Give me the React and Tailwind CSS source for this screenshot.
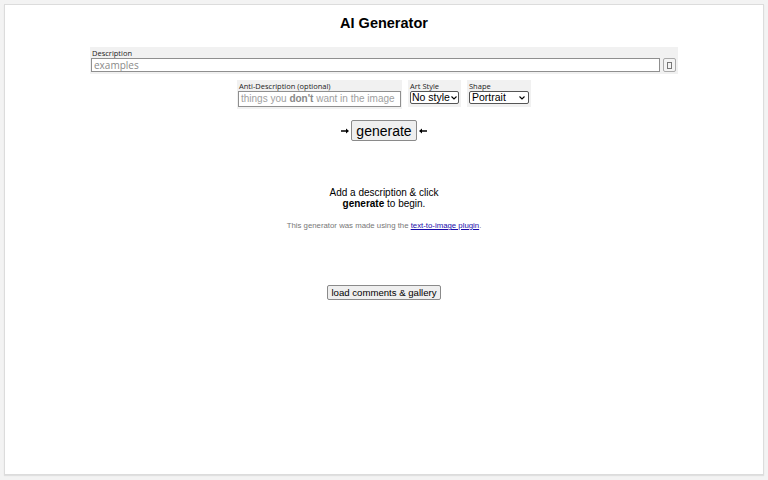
import React from 'react';

const font = { fontFamily: '"Liberation Sans", Arial, sans-serif' };
const labelFont = { fontFamily: '"Open Sans", "Noto Sans", sans-serif' };

const App = () => {
  return (
    <div className="w-[768px] h-[480px] bg-[#f3f3f3] p-[4px] pb-[5px]" style={font}>
      <div className="h-full bg-white border border-[#dcdcdc] shadow-[0_1px_1px_rgba(0,0,0,0.08)] flex flex-col items-center">
        <h1 className="mt-[9px] text-[14.5px] leading-[18px] font-bold text-black">AI Generator</h1>

        {/* description */}
        <div className="mt-[15px] w-[588px] bg-[#f1f1f1] px-[1px] pt-[1px] pb-[2px]">
          <div className="text-[7.5px] leading-[10px] text-[#222] pl-[1px]" style={labelFont}>Description</div>
          <div className="flex items-center gap-[3px]">
            <input
              className="w-[569px] h-[14px] border border-[#8f8f8f] bg-white px-[2px] text-[10px] text-[#333] placeholder:text-[#8a8a8a] outline-none"
              style={labelFont}
              placeholder="examples"
            />
            <button className="w-[13px] h-[14px] border border-[#aaa] rounded-[2px] bg-[#f4f4f4] flex items-center justify-center">
              <span className="block w-[5px] h-[7px] border border-[#777]" />
            </button>
          </div>
        </div>

        {/* options row */}
        <div className="mt-[6px] flex items-start gap-[6px]">
          <div className="bg-[#f1f1f1] px-[1px] pt-[1px] pb-[2px]">
            <div className="text-[7.5px] leading-[10px] text-[#222] pl-[1px]" style={labelFont}>Anti-Description (optional)</div>
            <div className="w-[163px] h-[16px] border border-[#8f8f8f] bg-white px-[2px] text-[10px] leading-[14px] text-[#a0a0a0] whitespace-nowrap overflow-hidden">
              things you <b className="text-[#888]">don't</b> want in the image
            </div>
          </div>
          <div className="bg-[#f1f1f1] px-[2px] pt-[1px] pb-[3px]">
            <div className="text-[7.5px] leading-[10px] text-[#222]" style={labelFont}>Art Style</div>
            <div className="w-[49px] h-[13px] border border-[#555] rounded-[2px] bg-white flex items-center justify-between pl-[1px] pr-[1px] text-[10.5px] leading-[11px] text-black whitespace-nowrap overflow-hidden">
              <span>No style</span>
              <svg className="shrink-0" width="6" height="4" viewBox="0 0 6 4"><path d="M0.5 0.5 L3 3 L5.5 0.5" fill="none" stroke="#000" strokeWidth="1.1" /></svg>
            </div>
          </div>
          <div className="bg-[#f1f1f1] px-[2px] pt-[1px] pb-[3px]">
            <div className="text-[7.5px] leading-[10px] text-[#222]" style={labelFont}>Shape</div>
            <div className="w-[60px] h-[13px] border border-[#555] rounded-[2px] bg-white flex items-center justify-between pl-[2px] pr-[3px] text-[10.5px] leading-[11px] text-black whitespace-nowrap">
              <span>Portrait</span>
              <svg className="shrink-0" width="6" height="4" viewBox="0 0 6 4"><path d="M0.5 0.5 L3 3 L5.5 0.5" fill="none" stroke="#000" strokeWidth="1.1" /></svg>
            </div>
          </div>
        </div>

        {/* generate */}
        <div className="mt-[11px] flex items-center gap-[2px]">
          <svg width="8" height="6" viewBox="0 0 8 6"><path d="M0 2.2 H5 V0.5 L8 3 L5 5.5 V3.8 H0 Z" fill="#000" /></svg>
          <button className="h-[21px] px-[4px] border border-[#8a8a8a] rounded-[2px] bg-[#efefef] text-[14px] leading-[16px] text-black">
            generate
          </button>
          <svg width="8" height="6" viewBox="0 0 8 6"><path d="M8 2.2 H3 V0.5 L0 3 L3 5.5 V3.8 H8 Z" fill="#000" /></svg>
        </div>

        <div className="mt-[46px] text-center text-[10px] leading-[11px] text-black">
          <div>Add a description &amp; click</div>
          <div><b>generate</b> to begin.</div>
        </div>

        <div className="mt-[12px] text-[7.8px] leading-[9px] text-[#777]">
          This generator was made using the{' '}
          <a href="#" className="text-[#1a0dab] underline">text-to-image plugin</a>.
        </div>

        <button className="mt-[55px] h-[15px] px-[3px] border border-[#8a8a8a] rounded-[2px] bg-[#efefef] text-[9.6px] leading-[12px] text-black">
          load comments &amp; gallery
        </button>
      </div>
    </div>
  );
};

export default App;
